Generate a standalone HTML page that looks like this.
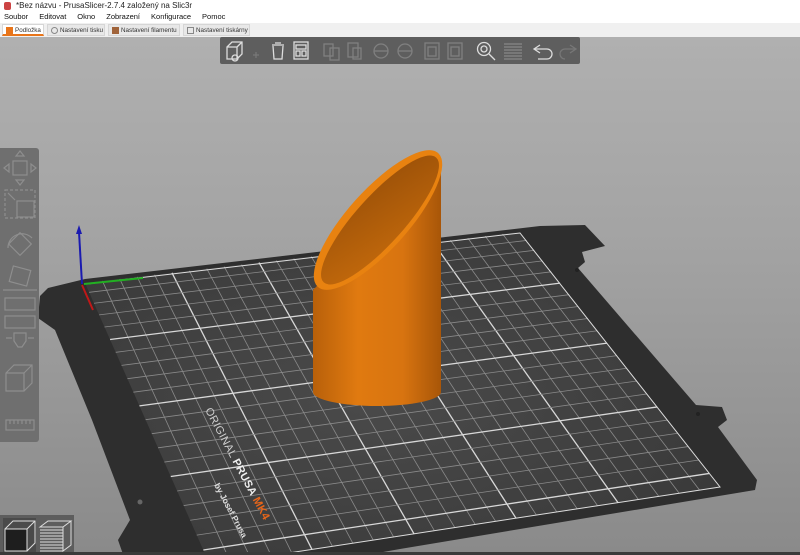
<!DOCTYPE html>
<html><head><meta charset="utf-8">
<style>
*{margin:0;padding:0;box-sizing:border-box}
body{width:800px;height:555px;overflow:hidden;font-family:"Liberation Sans",sans-serif;background:#fff;position:relative}
#title{position:absolute;left:0;top:0;width:800px;height:12px;font-size:8px;line-height:11px;color:#222;padding-left:16px}
#menu{position:absolute;left:0;top:12px;width:800px;height:11px;font-size:7.5px;line-height:10px;color:#111}
#menu span{margin-left:4px;margin-right:7px}
#tabs{position:absolute;left:0;top:23px;width:800px;height:14px;background:#f0f0f0;font-size:6.3px;line-height:12px}
.tab{position:absolute;top:1px;height:12px;padding-left:12px;color:#333;background:#e8e8e8;border:1px solid #d6d6d6;white-space:nowrap;overflow:hidden}
.tab i{position:absolute;left:3px;top:2px;width:7px;height:7px}
#vp{position:absolute;left:0;top:37px;width:800px;height:518px;background:linear-gradient(#b0b0b0,#a3a3a3 40%,#8a8a8a);overflow:hidden}
</style></head><body>
<div id="title"><span style="position:absolute;left:4px;top:2px;width:7px;height:8px;background:#c44;border-radius:2px"></span>*Bez názvu - PrusaSlicer-2.7.4 založený na Slic3r</div>
<div id="menu"><span>Soubor</span><span>Editovat</span><span>Okno</span><span>Zobrazení</span><span>Konfigurace</span><span>Pomoc</span></div>
<div id="tabs">
<div class="tab" style="left:2px;width:42px;border-bottom:2px solid #e8751a;background:#fff"><i style="background:#e8751a"></i>Podložka</div>
<div class="tab" style="left:47px;width:58px"><i style="border:1px solid #888;border-radius:50%"></i>Nastavení tisku</div>
<div class="tab" style="left:108px;width:72px"><i style="background:#a0633a"></i>Nastavení filamentu</div>
<div class="tab" style="left:183px;width:67px"><i style="border:1px solid #888"></i>Nastavení tiskárny</div>
</div>
<div id="vp">
<svg width="800" height="518" viewBox="0 37 800 518" style="position:absolute;left:0;top:0">
<defs><radialGradient id="sh" cx="0.45" cy="0.5" r="0.6"><stop offset="0" stop-color="#4a4a4a"/><stop offset="1" stop-color="#3a3a3a"/></radialGradient></defs>
<path d="M40,296 L48,288 L85,279 L540,226 L585,225 L605,246 L582,252 L585,262 L578,268 L696,405 L722,407 L727,420 L718,427 L757,480 L755,490 L400,549 L200,585 L125,560 L118,540 L130,520 L92,420 L55,330 L38,318 Z" fill="#2e2e2e"/>
<circle cx="140" cy="502" r="2.5" fill="#666"/>
<circle cx="577" cy="270" r="2" fill="#222"/><circle cx="698" cy="414" r="2" fill="#222"/>
<path id="sheet" d="M85,283 L520,232 L720,487 L210,565 Z" fill="url(#sh)"/>
<g id="grid"></g>
<path d="M87,284 L520,233 L720,487 L210,565" fill="none" stroke="#ddd" stroke-width="1"/>
<text x="0" y="0" transform="translate(205,410) rotate(62)" font-size="11" fill="#cfcfcf" font-family="Liberation Sans" letter-spacing="0.3">ORIGINAL <tspan font-weight="bold" fill="#eee">PRUSA</tspan> <tspan font-weight="bold" fill="#e8661a">MK4</tspan></text>
<text x="0" y="0" transform="translate(214,485) rotate(62)" font-size="8.5" font-weight="bold" fill="#ddd">by Josef Prusa</text>
<line x1="82" y1="284" x2="79" y2="232" stroke="#1a1ab0" stroke-width="2"/>
<path d="M79,225 L76,234 L82,234Z" fill="#1a1ab0"/>
<line x1="84" y1="284" x2="143" y2="278" stroke="#22b022" stroke-width="2"/>
<line x1="82" y1="285" x2="93" y2="310" stroke="#c01818" stroke-width="2"/>
<defs><linearGradient id="bd" x1="0" x2="1"><stop offset="0" stop-color="#b8600a"/><stop offset="0.35" stop-color="#e07a10"/><stop offset="0.7" stop-color="#d87410"/><stop offset="1" stop-color="#a85608"/></linearGradient>
<linearGradient id="in" x1="0" y1="1" x2="1" y2="0"><stop offset="0" stop-color="#c46a0c"/><stop offset="1" stop-color="#9a5008"/></linearGradient></defs>
<path d="M313,290 L313,392 A64,14 0 0 0 441,392 L441,160 Z" fill="url(#bd)"/>
<ellipse cx="378" cy="220" rx="90" ry="30" transform="rotate(-48 378 220)" fill="#e88210"/>
<ellipse cx="380" cy="220" rx="84" ry="24" transform="rotate(-48 380 220)" fill="url(#in)"/>
</svg>
<div style="position:absolute;left:220px;top:0;width:360px;height:27px;background:rgba(80,80,80,0.85);border-radius:2px"></div>
<svg width="360" height="27" style="position:absolute;left:220px;top:0" fill="none" stroke-width="1.3">
<g stroke="#ddd"><path d="M7,10 L12,5 L22,5 L22,17 L17,22 L7,22Z M7,10 L17,10 L17,22 M17,10 L22,5"/><circle cx="15" cy="21" r="3"/></g>
<g stroke="#777"><path d="M33,18 h6 M36,15 v6"/></g>
<g stroke="#ddd"><path d="M52,8 h12 M55,6 h6 M53,9 L54,22 L62,22 L63,9"/><rect x="74" y="5" width="14" height="17"/><rect x="76" y="8" width="10" height="4"/><rect x="76" y="14" width="4" height="5"/><rect x="82" y="14" width="4" height="5"/></g>
<g stroke="#808080"><rect x="104" y="7" width="9" height="12"/><rect x="110" y="11" width="9" height="12"/><rect x="128" y="6" width="10" height="14"/><rect x="133" y="11" width="8" height="11"/><circle cx="161" cy="14" r="7"/><path d="M154,14h14"/><circle cx="185" cy="14" r="7"/><path d="M178,14h14"/><rect x="205" y="6" width="14" height="16"/><rect x="208" y="10" width="8" height="9"/><rect x="228" y="6" width="14" height="16"/><rect x="231" y="10" width="8" height="9"/></g>
<g stroke="#ddd"><circle cx="264" cy="12" r="6.5"/><circle cx="264" cy="12" r="3"/><path d="M269,17 L275,23"/></g>
<g stroke="#888"><path d="M284,7h18M284,10h18M284,13h18M284,16h18M284,19h18M284,22h18"/></g>
<g stroke="#ddd"><path d="M320,8 L314,12 L320,16 M314,12 H327 A5,5 0 0 1 327,22 H318"/></g>
<g stroke="#777"><path d="M350,8 L356,12 L350,16 M356,12 H345 A5,5 0 0 0 345,22"/></g>
</svg>
<div style="position:absolute;left:0;top:111px;width:39px;height:294px;background:#6f6f6f;border-radius:0 3px 3px 0"></div>
<svg width="39" height="294" style="position:absolute;left:0;top:111px" fill="none" stroke="#8e8e8e" stroke-width="1.2">
<rect x="13" y="13" width="14" height="14"/><path d="M20,3 l-4,5 h8z M20,37 l-4,-5 h8z M4,20 l5,-4 v8z M36,20 l-5,-4 v8z"/>
<rect x="5" y="42" width="30" height="28" stroke-dasharray="3 2"/><rect x="17" y="53" width="17" height="16"/><path d="M8,45 l7,7"/>
<path d="M8,100 A14,14 0 0 1 32,90"/><rect x="12" y="88" width="16" height="16" transform="rotate(45 20 96)"/>
<rect x="11" y="120" width="18" height="16" transform="rotate(15 20 128)"/><path d="M3,142 h34"/>
<rect x="5" y="150" width="30" height="12"/><rect x="5" y="168" width="30" height="12"/>
<path d="M14,185 h12 v8 l-4,6 h-4 l-4,-6z M6,190 h6 M28,190h6"/>
<path d="M6,225 l8,-8 h18 v18 l-8,8 h-18z M6,225 h18 v18 M24,225 l8,-8"/>
<rect x="6" y="272" width="28" height="10"/><path d="M10,272v4M14,272v4M18,272v4M22,272v4M26,272v4M30,272v4"/>
</svg>
<div style="position:absolute;left:0;top:478px;width:74px;height:40px;background:#5d5d5d"></div>
<svg width="74" height="40" style="position:absolute;left:0;top:478px" fill="none" stroke="#ddd" stroke-width="1">
<rect x="3" y="3" width="33" height="35" fill="#4a4a4a" stroke="none"/>
<path d="M5,14 h22 v22 h-22z" fill="#1e1e1e"/><path d="M5,14 l8,-8 h22 v22 l-8,8 M27,14 l8,-8"/>
<g><path d="M40,12 l8,-6 h23 l-8,6 h-23z"/><path d="M40,15h23M40,18h23M40,21h23M40,24h23M40,27h23M40,30h23M40,33h23M40,36h23M63,12v24 l8,-6 v-24"/></g>
</svg>
<div style="position:absolute;left:0;top:515px;width:800px;height:3px;background:#3a3a3a"></div>
</div>
<script>
(function(){
var P=[[85,283],[520,232],[720,487],[210,565]];
function pt(u,v){var a=P[0],b=P[1],c=P[2],d=P[3];
var x=(1-u)*(1-v)*a[0]+u*(1-v)*b[0]+u*v*c[0]+(1-u)*v*d[0];
var y=(1-u)*(1-v)*a[1]+u*(1-v)*b[1]+u*v*c[1]+(1-u)*v*d[1];return [x,y];}
var g=document.getElementById('grid'),s='';
var NU=25,NV=21;
function vv(j){var t=j/NV;return Math.pow(t,1.12);}
for(var i=1;i<NU;i++){var u=i/NU,p=pt(u,0),q=pt(u,1),bold=(i%5==0);
s+='<line x1="'+p[0]+'" y1="'+p[1]+'" x2="'+q[0]+'" y2="'+q[1]+'" stroke="'+(bold?'#d8d8d8':'#8a8a8a')+'" stroke-width="'+(bold?1.3:0.8)+'"/>';}
for(var j=1;j<NV;j++){var v=vv(j),p=pt(0,v),q=pt(1,v),bold=(j%5==0);
s+='<line x1="'+p[0]+'" y1="'+p[1]+'" x2="'+q[0]+'" y2="'+q[1]+'" stroke="'+(bold?'#d8d8d8':'#8a8a8a')+'" stroke-width="'+(bold?1.3:0.8)+'"/>';}
g.innerHTML=s;
})();
</script>
</body></html>
